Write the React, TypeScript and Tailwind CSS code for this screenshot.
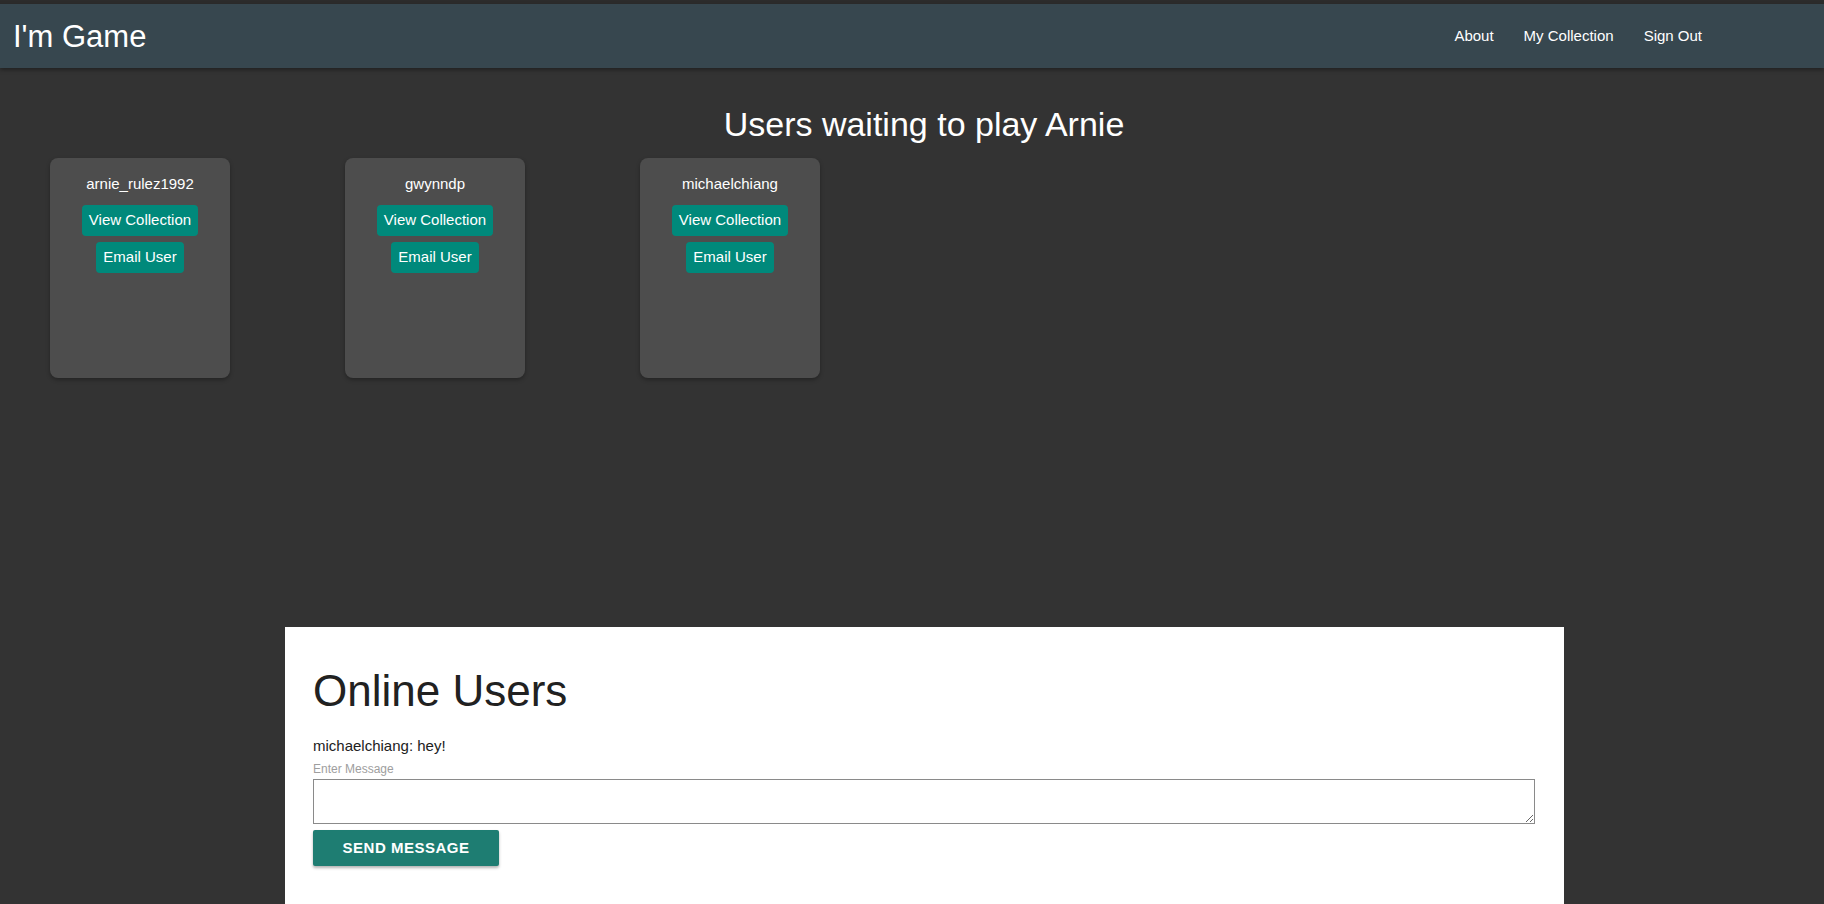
const users = ["arnie_rulez1992", "gwynndp", "michaelchiang"];

function UserCard({ name }: { name: string }) {
  return (
    <div className="w-[180px] h-[220px] bg-[#4d4d4d] rounded-lg shadow-[0_2px_4px_rgba(0,0,0,0.3)] flex flex-col items-center pt-[17px]">
      <div className="text-[15px] leading-[18px] text-white">{name}</div>
      <button className="mt-[12px] h-[31px] px-[7px] rounded bg-[#00897b] text-white text-[15px]">
        View Collection
      </button>
      <button className="mt-[6px] h-[31px] px-[7px] rounded bg-[#00897b] text-white text-[15px]">
        Email User
      </button>
    </div>
  );
}

export default function App() {
  return (
    <div className="min-h-screen h-[904px] overflow-hidden bg-[#333333] font-['Liberation_Sans',Arial,sans-serif] flex flex-col">
      <div className="h-[4px] bg-[#2c2c2c]" />
      <nav className="h-[64px] bg-[#37474f] flex items-center justify-between shadow-[0_2px_4px_rgba(0,0,0,0.35)] relative z-10">
        <div className="pl-[13px] text-[31px] text-white leading-none">I'm Game</div>
        <ul className="flex items-center pr-[107px] text-[15px] text-white">
          <li className="px-[15px]">About</li>
          <li className="px-[15px]">My Collection</li>
          <li className="px-[15px]">Sign Out</li>
        </ul>
      </nav>

      <h1 className="mt-[36px] pl-[24px] text-center text-[34px] leading-[40px] text-white">
        Users waiting to play Arnie
      </h1>

      <div className="mt-[14px] pl-[50px] flex gap-[115px]">
        {users.map((u) => (
          <UserCard key={u} name={u} />
        ))}
      </div>

      <div className="mt-[249px] ml-[285px] w-[1279px] flex-1 bg-white px-[28px] pt-[38px]">
        <h2 className="text-[44px] leading-[52px] text-[#212121]">Online Users</h2>
        <p className="mt-[20px] text-[15px] leading-[18px] text-[#212121]">michaelchiang: hey!</p>
        <label className="block mt-[7px] text-[12px] leading-[14px] text-[#9e9e9e]">Enter Message</label>
        <textarea className="mt-[3px] block w-[1222px] h-[45px] border border-[#8a8a8a] outline-none" />
        <button className="mt-[6px] w-[186px] h-[36px] rounded-[2px] bg-[#1e7d72] text-white text-[15px] font-bold tracking-[0.5px] shadow-[0_2px_3px_rgba(0,0,0,0.3)]">
          SEND MESSAGE
        </button>
      </div>
    </div>
  );
}
